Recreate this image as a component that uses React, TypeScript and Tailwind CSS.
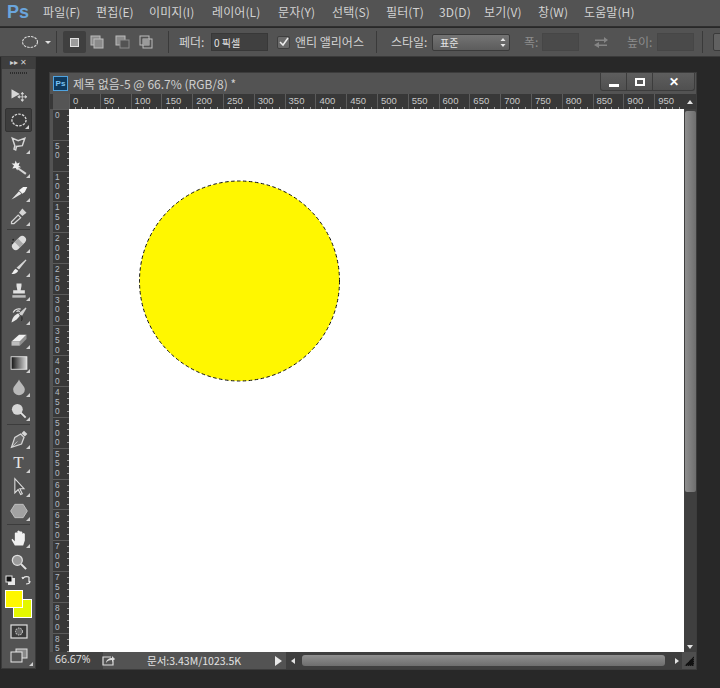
import React from "react";

const KR = "font-['Noto_Sans_CJK_KR','Liberation_Sans',sans-serif]";
const C = "#d6d6d6";

const icons: Record<string, React.ReactNode> = {
  move: <><path d="M3 4l10 5.500L3 15z" fill={C}/><path d="M16 9v8M12 13h8M16 7.500l-1.500 2h3zM16 18.500l-1.500-2h3zM10.500 13l2-1.500v3zM21.500 13l-2-1.500v3z" stroke={C} fill={C} strokeWidth="1"/></>,
  marquee: <ellipse cx="12" cy="12" rx="8.500" ry="7" fill="none" stroke={C} strokeWidth="1.600" strokeDasharray="3 1.400"/>,
  lasso: <path d="M4 5l7 3 8-3-3 9-7 1-1 4-2-1 1-4z" fill="none" stroke={C} strokeWidth="1.800"/>,
  wand: <><path d="M11 11l10 7-1.500 2-10-7z" fill={C}/><path d="M8 3l1.500 3.500 3.500-1-1.500 3.500 3 2-3.500.500L10 15l-2-3-4 .500 2-3.500-3-2.500 4 0z" fill="#ececec"/></>,
  brushsel: <><path d="M3 21l9-10 3 3-8 5z" fill="#e4e4e4"/><path d="M12 10l5-4h5l-3 6-3 2z" fill="#f4f4f4"/></>,
  dropper: <><path d="M5 21l-2 0 0-2 8-8 3 3-8 7z" fill="none" stroke={C} strokeWidth="1.500"/><path d="M12 8l4-5 5 5-5 4z" fill={C}/></>,
  heal: <><g transform="rotate(-45 12 12)"><rect x="2" y="7.500" width="20" height="9" rx="4.500" fill="#dddddd"/><rect x="9" y="7.500" width="6" height="9" fill="#a9a9a9"/></g><circle cx="5" cy="8" r="1" fill="#222"/><circle cx="4" cy="12" r="1" fill="#222"/></>,
  brush: <><path d="M20 3l1 1-9 11-3-2z" fill={C}/><path d="M8 14l3 2.500c-1 3-5 4.500-8 3.500 2-1 2-4 5-6z" fill="#f0f0f0"/></>,
  stamp: <><path d="M9 3h6v3l-1 5h5v4H5v-4h5L9 6z" fill="#e2e2e2"/><rect x="4" y="17" width="16" height="3" fill="#bdbdbd"/></>,
  history: <><path d="M3 21c1-6 4-9 8-11l2 3c-2 3-5 6-10 8z" fill="#e8e8e8"/><path d="M12 10l8-7 1 1-6 10z" fill="#cfcfcf"/><path d="M5 9c2-4 6-5 9-4M9 8c1-1 3-1 4 0" fill="none" stroke="#e4e4e4" strokeWidth="1.500"/><path d="M14 12c2 2 2 5 1 7" fill="none" stroke="#222" strokeWidth="1.200"/></>,
  eraser: <><path d="M3 15l9-8h9l-8 8z" fill="#f0f0f0"/><path d="M3 15h10v5H3z" fill="#bdbdbd"/><path d="M13 15l8-8v5l-8 8z" fill="#8f8f8f"/></>,
  gradient: <><defs><linearGradient id="gr"><stop offset="0" stopColor="#111"/><stop offset="1" stopColor="#ddd"/></linearGradient></defs><rect x="2.500" y="4.500" width="19" height="15" fill="url(#gr)" stroke="#eee"/></>,
  drop: <path d="M12 3c2 5 7 8 7 12a7 7 0 0 1-14 0c0-4 5-7 7-12z" fill="#b9b9b9"/>,
  dodge: <><circle cx="10" cy="10" r="6.500" fill="#d6d6d6"/><path d="M14 14l6 6" stroke="#e4e4e4" strokeWidth="2.200"/></>,
  pen: <><path d="M18 2l4 4-3 3-4-4z" fill={C}/><path d="M14 6l4 4-3 8-12 4 4-12z" fill="#6a6a6a" stroke={C} strokeWidth="1.500"/><path d="M3 22l7-7" stroke={C}/></>,
  path: <path d="M7 2v17l4-4 3 6 2-1-3-6h5z" fill="#4a4a4a" stroke="#dddddd" strokeWidth="1.300"/>,
  hex: <path d="M7 4h10l5 8-5 8H7l-5-8z" fill="#a2a2a2" stroke="#c9c9c9"/>,
  hand: <path d="M7 21l-4-7 1-1 3 3V6l1.500-1L10 6v5V4l1.500-1L13 4v7V4.500L14.500 4 16 5v7V7l1.500-1 1.500 1v8l-2 6z" fill="#f0f0f0"/>,
  zoom: <><circle cx="10" cy="10" r="6" fill="#9a9a9a" stroke="#dedede" strokeWidth="1.500"/><path d="M14.500 14.500l6 6" stroke="#e4e4e4" strokeWidth="2.400"/></>,
};

function Tool({ name, active, corner = true, text }: { name?: string; active?: boolean; corner?: boolean; text?: string }) {
  return (
    <div className={`relative h-[24px] mx-[3px] flex items-center justify-center rounded-[2px] ${active ? "bg-[#3d3d3d] border border-[#333333]" : ""}`}>
      {text ? (
        <span className="font-['Liberation_Serif',serif] text-[17px] text-[#e4e4e4] leading-none">{text}</span>
      ) : (
        <svg width="20" height="20" viewBox="0 0 24 24">{name ? icons[name] : null}</svg>
      )}
      {corner && <span className="absolute right-[2px] bottom-[2px] w-0 h-0 border-l-[4px] border-l-transparent border-b-[4px] border-b-[#d0d0d0]" />}
    </div>
  );
}

const Sep = () => <div className="h-px mx-[5px] bg-[#3c3c3c] my-[1.150px]" />;

function Toolbar() {
  return (
    <div className="w-[35px] ml-px h-[612px] bg-[#535353] border-x border-b border-[#3a3a3a] flex flex-col shrink-0">
      <div className="h-[12px] bg-[#3e3e3e] flex items-center justify-between px-[8px] text-[#d0d0d0] text-[8px] leading-none font-['Liberation_Sans',sans-serif]">
        <span>▸▸</span><span>✕</span>
      </div>
      <div className="h-[2px] mx-[8px] mt-[3px] mb-[10px] border-y border-dotted border-[#2c2c2c]" />
      <Tool name="move" corner={false} />
      <Tool name="marquee" active />
      <Tool name="lasso" />
      <Tool name="wand" />
      <Tool name="brushsel" />
      <Tool name="dropper" />
      <Sep />
      <Tool name="heal" />
      <Tool name="brush" />
      <Tool name="stamp" />
      <Tool name="history" />
      <Tool name="eraser" />
      <Tool name="gradient" />
      <Tool name="drop" />
      <Tool name="dodge" />
      <Sep />
      <Tool name="pen" />
      <Tool text="T" />
      <Tool name="path" />
      <Tool name="hex" />
      <Sep />
      <Tool name="hand" />
      <Tool name="zoom" corner={false} />
      <div className="flex justify-between px-[3px] h-[14px] items-center">
        <svg width="11" height="11" viewBox="0 0 11 11"><rect x="3" y="3" width="7" height="7" fill="#e8e8e8"/><rect x="1" y="1" width="6" height="6" fill="#111" stroke="#e8e8e8"/></svg>
        <svg width="11" height="11" viewBox="0 0 11 11"><path d="M2 4c0-2 3-3 6-2M8 2v5M2 4L1 2M9 6c0 2-1 3-4 3" fill="none" stroke="#e8e8e8" strokeWidth="1.200"/></svg>
      </div>
      <div className="relative h-[29px] mt-[2px]">
        <div className="absolute left-[11px] top-[9px] w-[19px] h-[19px] bg-[#e4f700] border border-white" />
        <div className="absolute left-[3px] top-0 w-[18px] h-[18px] bg-[#fff700] border border-white" />
      </div>
      <div className="flex justify-center mt-[5px] h-[16px]">
        <svg width="18" height="15" viewBox="0 0 18 15"><rect x="1" y="1" width="16" height="13" fill="#3a3a3a" stroke="#e0e0e0" strokeWidth="1.200"/><circle cx="9" cy="7.500" r="3.500" fill="#666" stroke="#ddd" strokeDasharray="1.500 1"/></svg>
      </div>
      <div className="relative flex justify-center mt-[8px] h-[18px]">
        <svg width="18" height="16" viewBox="0 0 18 16"><rect x="6" y="1" width="11" height="9" fill="#888" stroke="#e0e0e0"/><rect x="1" y="4" width="11" height="10" fill="#555" stroke="#e8e8e8"/></svg>
        <span className="absolute right-[2px] bottom-0 w-0 h-0 border-l-[4px] border-l-transparent border-b-[4px] border-b-[#d0d0d0]" />
      </div>
    </div>
  );
}

const menus = [
  ["파일(F)", 43], ["편집(E)", 96], ["이미지(I)", 149], ["레이어(L)", 212], ["문자(Y)", 278], ["선택(S)", 332], ["필터(T)", 386], ["3D(D)", 439], ["보기(V)", 484], ["창(W)", 538], ["도움말(H)", 584],
] as const;

function MenuBar() {
  return (
    <div className="h-[27px] bg-[#535353] border-b border-[#2f2f2f] flex items-center pb-[2px] shrink-0">
      <span className="w-[43px] pl-[7px] text-[#6aa5dc] font-bold text-[18px] leading-none font-['Liberation_Sans',sans-serif]">Ps</span>
      {menus.map(([t], i) => {
        const next = i + 1 < menus.length ? menus[i + 1][1] : 650;
        return <span key={t} style={{ width: next - menus[i][1] }} className="text-[12px] tracking-[0.1px] text-[#d2d2d2] whitespace-nowrap">{t}</span>;
      })}
    </div>
  );
}

const VSep = () => <div className="w-px h-[22px] bg-[#3a3a3a] shrink-0" />;

function Options() {
  return (
    <div className="h-[29px] mt-px bg-[#535353] border-b border-[#3a3a3a] flex items-center shrink-0 text-[12px] text-[#d2d2d2] overflow-hidden">
      <svg className="ml-[21px] shrink-0" width="18" height="14" viewBox="0 0 18 14"><ellipse cx="9" cy="7" rx="7.500" ry="5.500" fill="none" stroke="#dcdcdc" strokeWidth="1.100" strokeDasharray="2.500 1"/></svg>
      <span className="ml-[6px] w-0 h-0 border-x-[3px] border-x-transparent border-t-[3px] border-t-[#e0e0e0] shrink-0" />
      <span className="ml-[5px]" /><VSep />
      <div className="ml-[6px] w-[23px] h-[22px] bg-[#3f3f3f] rounded-[2px] flex items-center justify-center shrink-0">
        <span className="w-[9px] h-[9px] bg-[#9b9b9b] border border-[#e0e0e0]" />
      </div>
      <svg className="ml-[4px] shrink-0" width="15" height="14" viewBox="0 0 15 14"><rect x="1" y="1" width="9" height="9" fill="#8b8b8b" stroke="#bdbdbd"/><rect x="4" y="4" width="9" height="9" fill="#8b8b8b" stroke="#bdbdbd"/></svg>
      <svg className="ml-[10px] shrink-0" width="15" height="14" viewBox="0 0 15 14"><rect x="1" y="1" width="9" height="9" fill="#8b8b8b" stroke="#bdbdbd"/><rect x="5" y="5" width="9" height="8" fill="#535353" stroke="#8b8b8b"/></svg>
      <svg className="ml-[9px] shrink-0" width="15" height="14" viewBox="0 0 15 14"><rect x="1" y="1" width="9" height="9" fill="none" stroke="#bdbdbd"/><rect x="4" y="4" width="9" height="9" fill="none" stroke="#bdbdbd"/><rect x="4" y="4" width="6" height="6" fill="#9b9b9b"/></svg>
      <span className="ml-[14px]" /><VSep />
      <span className="ml-[10px] w-[32px] whitespace-nowrap shrink-0">페더:</span>
      <div className="w-[57px] h-[18px] bg-[#404040] border border-[#383838] flex items-center pl-[2px] text-[10px] text-[#e2e2e2] shrink-0 whitespace-nowrap">0 픽셀</div>
      <div className="ml-[9px] w-[13px] h-[13px] bg-[#6a6a6a] border border-[#3f3f3f] rounded-[2px] flex items-center justify-center shrink-0">
        <svg width="11" height="11" viewBox="0 0 11 11"><path d="M2 5l3 3 5-7" fill="none" stroke="#eeeeee" strokeWidth="1.500"/></svg>
      </div>
      <span className="ml-[5px] w-[81px] whitespace-nowrap shrink-0">앤티 앨리어스</span>
      <VSep />
      <span className="ml-[14px] w-[41px] whitespace-nowrap shrink-0">스타일:</span>
      <div className="w-[78px] h-[17px] bg-gradient-to-b from-[#747474] to-[#5c5c5c] border border-[#3a3a3a] rounded-[2px] flex items-center justify-between pl-[7px] pr-[3px] text-[10px] text-[#e6e6e6] shrink-0">
        <span>표준</span>
        <svg width="6" height="9" viewBox="0 0 6 9"><path d="M3 0l2.500 3h-5zM3 9L.500 6h5z" fill="#e6e6e6"/></svg>
      </div>
      <span className="ml-[14px] w-[18px] text-[#8c8c8c] whitespace-nowrap shrink-0">폭:</span>
      <div className="w-[37px] h-[18px] bg-[#4a4a4a] border border-[#464646] shrink-0" />
      <svg className="ml-[15px] shrink-0" width="14" height="12" viewBox="0 0 14 12"><path d="M1 3.500h9V1l4 3-4 3V5H1zM13 8.500H5V6L0 9l5 3v-2h8z" fill="#858585"/></svg>
      <span className="ml-[19px] w-[30px] text-[#8c8c8c] whitespace-nowrap shrink-0">높이:</span>
      <div className="w-[37px] h-[18px] bg-[#4a4a4a] border border-[#464646] shrink-0" />
      <span className="ml-[8px]" /><VSep />
      <div className="ml-[10px] w-[20px] h-[18px] bg-[#616161] border border-[#3a3a3a] rounded-[2px] shrink-0" />
    </div>
  );
}

const ticksX = Array.from({ length: 20 }, (_, i) => i * 50);
const ticksY = Array.from({ length: 18 }, (_, i) => i * 50);

function HRuler() {
  return (
    <div className="h-[15px] flex bg-[#383838] shrink-0">
      <div className="w-[16px] ml-[3px] bg-[#555555] shrink-0" />
      <div className="flex-1 relative overflow-hidden flex">
        {ticksX.map((n) => (
          <div key={n} className="w-[30.800px] shrink-0 h-full border-l border-[#5c5c5c] pl-[3px] text-[9.500px] leading-[13px] text-[#c8c8c8] font-['Liberation_Sans',sans-serif] bg-[repeating-linear-gradient(90deg,transparent_0,transparent_5.160px,#9a9a9a_5.160px,#9a9a9a_6.160px)] bg-no-repeat bg-bottom bg-[length:100%_2px]">{n}</div>
        ))}
      </div>
      <div className="w-[13px] shrink-0 flex justify-center items-center">
        <span className="w-0 h-0 border-x-[3px] border-x-transparent border-b-[4px] border-b-[#e2e2e2]" />
      </div>
    </div>
  );
}

function VRuler() {
  return (
    <div className="w-[16px] ml-[3px] bg-[#383838] overflow-hidden shrink-0">
      {ticksY.map((n) => (
        <div key={n} className="h-[30.800px] border-t border-[#5c5c5c] flex flex-col pl-[2px] pt-[1px] text-[8.300px] leading-[9.600px] text-[#b4bcc4] font-['Liberation_Sans',sans-serif] bg-[repeating-linear-gradient(180deg,transparent_0,transparent_5.160px,#9a9a9a_5.160px,#9a9a9a_6.160px)] bg-no-repeat bg-right bg-[length:2px_100%]">
          {(n === 850 ? "85" : String(n)).split("").map((d, i) => <span key={i}>{d}</span>)}
        </div>
      ))}
    </div>
  );
}

function DocWindow() {
  return (
    <div className="w-[648px] h-[598px] ml-[13px] mt-[15px] bg-[#535353] border border-[#3c3c3c] flex flex-col shrink-0">
      <div className="h-[21px] flex items-start shrink-0">
        <span className="ml-[3px] mt-[3px] w-[15px] h-[15px] bg-[#0f3a5e] border border-[#4fa3e0] text-[#7cc4f4] text-[8px] leading-[13px] font-bold text-center font-['Liberation_Sans',sans-serif] shrink-0">Ps</span>
        <span className="ml-[5px] mt-[2px] text-[12px] text-[#cfcfcf] whitespace-nowrap">제목 없음-5 @ 66.7% (RGB/8) *</span>
        <div className="ml-auto mr-px w-[95px] h-[18px] flex rounded-b-[3px] border border-t-0 border-[#3c3c3c] bg-gradient-to-b from-[#5e5e5e] to-[#505050] shrink-0">
          <div className="w-[26px] flex items-end justify-center pb-[3px] border-r border-[#3c3c3c]"><span className="w-[10px] h-[3px] bg-white" /></div>
          <div className="w-[26px] flex items-center justify-center border-r border-[#3c3c3c]"><span className="w-[10px] h-[8px] border-2 border-white" /></div>
          <div className="flex-1 flex items-center justify-center text-white text-[12px] leading-none font-bold font-['Liberation_Sans',sans-serif]">✕</div>
        </div>
      </div>
      <HRuler />
      <div className="flex-1 flex min-h-0">
        <VRuler />
        <div className="relative w-[615px] bg-white shrink-0">
          <svg className="absolute left-[68px] top-[70px]" width="205" height="204" viewBox="0 0 205 204">
            <circle cx="102.500" cy="102" r="100" fill="#fff700" />
            <circle cx="102.500" cy="102" r="100" fill="none" stroke="#111" strokeWidth="1" strokeDasharray="3.500 2.500" />
          </svg>
        </div>
        <div className="flex-1 bg-[#3f3f3f] flex flex-col items-center pt-[2px] pb-[3px]">
          <div className="w-[11px] h-[381px] rounded-[2px] bg-gradient-to-r from-[#8e8e8e] to-[#6e6e6e]" />
          <span className="mt-auto w-0 h-0 border-x-[3px] border-x-transparent border-t-[4px] border-t-[#e2e2e2]" />
        </div>
      </div>
      <div className="h-[17px] flex items-center shrink-0 bg-[#535353] text-[10.500px] text-[#e2e2e2]">
        <span className="w-[53px] h-full pl-[5px] bg-[#424242] leading-[15px] shrink-0 font-['Open_Sans',sans-serif]">66.67%</span>
        <svg className="ml-[-1px] shrink-0" width="14" height="11" viewBox="0 0 14 11"><path d="M9 2H1v8h10V6" fill="none" stroke="#dddddd" strokeWidth="1.200"/><path d="M4 8c0-3 3-5 6-5V1l3 3-3 3V5c-3 0-5 1-6 3z" fill="#dddddd"/></svg>
        <span className="ml-[31px] w-[128px] whitespace-nowrap shrink-0">문서:3.43M/1023.5K</span>
        <span className="w-0 h-0 border-y-[5px] border-y-transparent border-l-[7px] border-l-[#e8e8e8] shrink-0" />
        <div className="ml-[4px] flex-1 h-full bg-[#3f3f3f] flex items-center pl-[5px]">
          <span className="w-0 h-0 border-y-[3px] border-y-transparent border-r-[4px] border-r-[#e2e2e2] shrink-0" />
          <div className="ml-[7px] w-[363px] h-[11px] rounded-[3px] bg-gradient-to-b from-[#909090] to-[#6e6e6e] shrink-0" />
          <span className="ml-[10px] w-0 h-0 border-y-[3px] border-y-transparent border-l-[4px] border-l-[#e2e2e2] shrink-0" />
          <svg className="ml-auto shrink-0 bg-[#4e4e4e]" width="14" height="17" viewBox="0 0 14 17"><path d="M12 4v10H2z" fill="#111" stroke="#4e4e4e" strokeDasharray="1 1"/></svg>
        </div>
      </div>
    </div>
  );
}

export default function App() {
  return (
    <div className={`w-[720px] h-[688px] bg-[#282828] overflow-hidden flex flex-col ${KR}`}>
      <MenuBar />
      <Options />
      <div className="flex items-start">
        <Toolbar />
        <DocWindow />
      </div>
    </div>
  );
}
